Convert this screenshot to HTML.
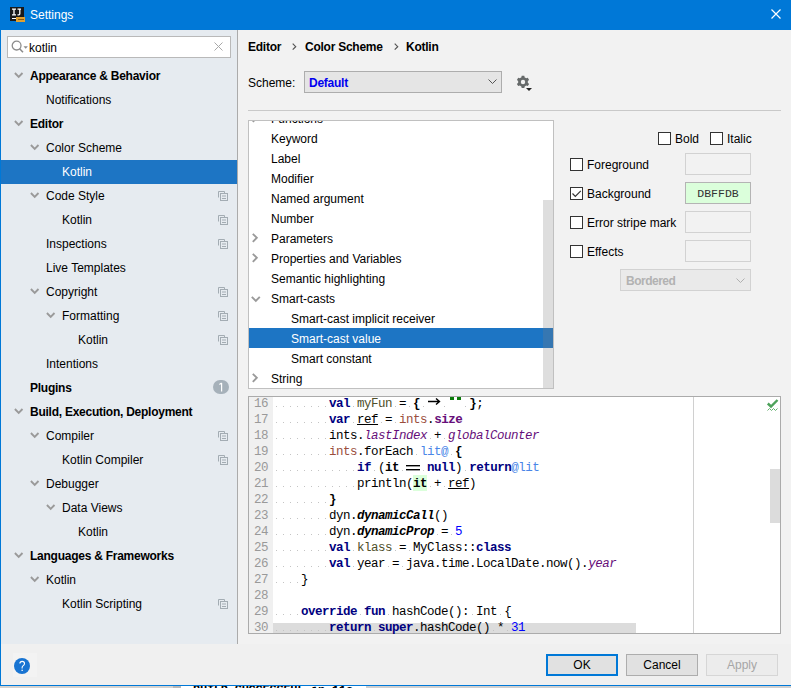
<!DOCTYPE html>
<html><head><meta charset="utf-8"><style>
*{margin:0;padding:0;box-sizing:border-box}
html,body{width:791px;height:688px;overflow:hidden;background:#F0F0F0;font-family:"Liberation Sans",sans-serif;font-size:12px;color:#000}
.a{position:absolute}
.t{position:absolute;line-height:16px;white-space:nowrap}
.b{font-weight:bold;letter-spacing:-0.25px}
.m{font-family:"Liberation Mono",monospace}
svg{position:absolute;overflow:visible}
</style></head><body>
<div class="a" style="left:0px;top:0px;width:791px;height:686px;background:#F0F0F0;"></div>
<div class="a" style="left:0px;top:0px;width:791px;height:30px;background:#0078D7;"></div>
<div class="a" style="left:0px;top:0px;width:1px;height:686px;background:#0078D7;"></div>
<div class="a" style="left:0px;top:685px;width:791px;height:1px;background:#0078D7;"></div>
<div class="a" style="left:0px;top:686px;width:173px;height:2px;background:#D6D3CF;"></div>
<div class="a" style="left:173px;top:686px;width:8px;height:2px;background:#B8B8B8;"></div>
<div class="a" style="left:181px;top:686px;width:185px;height:2px;background:#FFFFFF;"></div>
<div class="a" style="left:366px;top:686px;width:425px;height:2px;background:#D0D0D0;"></div>
<div class="a" style="left:193px;top:686px;width:173px;height:2px;overflow:hidden"><div class="t m b" style="left:0;top:-1px;font-size:12px;line-height:12px;color:#000">BUILD SUCCESSFUL in 11s</div></div>
<div class="a" style="left:10px;top:7px;width:14px;height:14px;background:#1A1A1A;"></div>
<svg style="left:11px;top:8px" width="12" height="8"><path d="M1 1.2H5M3 1.2V6.8M1 6.8H5M6.5 1.2H10M8.8 1.2V5.8Q8.8 6.8 7.8 6.8H6.5" fill="none" stroke="#fff" stroke-width="1.3"/></svg>
<div class="a" style="left:12px;top:18px;width:5px;height:1px;background:#fff;"></div>
<div class="a" style="left:16px;top:17px;width:9px;height:5px;background:#E0A030;"></div>
<div class="a" style="left:18px;top:19px;width:6px;height:1px;background:#8A5A10;"></div>
<div class="t " style="left:30px;top:7px;color:#fff">Settings</div>
<svg style="left:771px;top:9px" width="10" height="10"><path d="M0.5 0.5L9.5 9.5M9.5 0.5L0.5 9.5" stroke="#fff" stroke-width="1.2"/></svg>
<div class="a" style="left:1px;top:30px;width:236px;height:614px;background:#E6EBF0;"></div>
<div class="a" style="left:237px;top:30px;width:1px;height:614px;background:#ABABAB;"></div>
<div class="a" style="left:238px;top:30px;width:553px;height:614px;background:#F2F2F2;"></div>
<div class="a" style="left:7px;top:36px;width:224px;height:22px;background:#fff;border:1px solid #B9B9B9"></div>
<svg style="left:11px;top:40px" width="20" height="14"><circle cx="5.6" cy="5.6" r="4.4" fill="none" stroke="#8C8C8C" stroke-width="1.3"/><path d="M8.6 8.8L12 12.2" stroke="#8C8C8C" stroke-width="1.6"/><path d="M12.5 6.2h4.4l-2.2 2.6z" fill="#8C8C8C"/></svg>
<div class="t " style="left:29px;top:40px;">kotlin</div>
<svg style="left:214px;top:42px" width="9" height="9"><path d="M0.5 0.5L8.5 8.5M8.5 0.5L0.5 8.5" stroke="#A8A8A8" stroke-width="1"/></svg>
<svg style="left:14px;top:72px" width="10" height="7"><path d="M0.9 1L4.7 4.8L8.5 1" fill="none" stroke="#9A9A9A" stroke-width="1.9"/></svg>
<div class="t b" style="left:30px;top:68px;color:#000">Appearance &amp; Behavior</div>
<div class="t " style="left:46px;top:92px;color:#000">Notifications</div>
<svg style="left:14px;top:120px" width="10" height="7"><path d="M0.9 1L4.7 4.8L8.5 1" fill="none" stroke="#9A9A9A" stroke-width="1.9"/></svg>
<div class="t b" style="left:30px;top:116px;color:#000">Editor</div>
<svg style="left:30px;top:144px" width="10" height="7"><path d="M0.9 1L4.7 4.8L8.5 1" fill="none" stroke="#9A9A9A" stroke-width="1.9"/></svg>
<div class="t " style="left:46px;top:140px;color:#000">Color Scheme</div>
<div class="a" style="left:1px;top:160px;width:236px;height:24px;background:#1D75C4;"></div>
<div class="t " style="left:62px;top:164px;color:#fff">Kotlin</div>
<svg style="left:30px;top:192px" width="10" height="7"><path d="M0.9 1L4.7 4.8L8.5 1" fill="none" stroke="#9A9A9A" stroke-width="1.9"/></svg>
<div class="t " style="left:46px;top:188px;color:#000">Code Style</div>
<svg style="left:218px;top:191px" width="10" height="10"><path d="M0.5 6.5V0.5H6.5V2" fill="none" stroke="#A3ACB3" stroke-width="1"/><rect x="2.5" y="2.5" width="7" height="7" fill="none" stroke="#A3ACB3" stroke-width="1"/><path d="M4 5h4M4 7.5h4" stroke="#A3ACB3" stroke-width="1"/></svg>
<div class="t " style="left:62px;top:212px;color:#000">Kotlin</div>
<svg style="left:218px;top:215px" width="10" height="10"><path d="M0.5 6.5V0.5H6.5V2" fill="none" stroke="#A3ACB3" stroke-width="1"/><rect x="2.5" y="2.5" width="7" height="7" fill="none" stroke="#A3ACB3" stroke-width="1"/><path d="M4 5h4M4 7.5h4" stroke="#A3ACB3" stroke-width="1"/></svg>
<div class="t " style="left:46px;top:236px;color:#000">Inspections</div>
<svg style="left:218px;top:239px" width="10" height="10"><path d="M0.5 6.5V0.5H6.5V2" fill="none" stroke="#A3ACB3" stroke-width="1"/><rect x="2.5" y="2.5" width="7" height="7" fill="none" stroke="#A3ACB3" stroke-width="1"/><path d="M4 5h4M4 7.5h4" stroke="#A3ACB3" stroke-width="1"/></svg>
<div class="t " style="left:46px;top:260px;color:#000">Live Templates</div>
<svg style="left:30px;top:288px" width="10" height="7"><path d="M0.9 1L4.7 4.8L8.5 1" fill="none" stroke="#9A9A9A" stroke-width="1.9"/></svg>
<div class="t " style="left:46px;top:284px;color:#000">Copyright</div>
<svg style="left:218px;top:287px" width="10" height="10"><path d="M0.5 6.5V0.5H6.5V2" fill="none" stroke="#A3ACB3" stroke-width="1"/><rect x="2.5" y="2.5" width="7" height="7" fill="none" stroke="#A3ACB3" stroke-width="1"/><path d="M4 5h4M4 7.5h4" stroke="#A3ACB3" stroke-width="1"/></svg>
<svg style="left:46px;top:312px" width="10" height="7"><path d="M0.9 1L4.7 4.8L8.5 1" fill="none" stroke="#9A9A9A" stroke-width="1.9"/></svg>
<div class="t " style="left:62px;top:308px;color:#000">Formatting</div>
<svg style="left:218px;top:311px" width="10" height="10"><path d="M0.5 6.5V0.5H6.5V2" fill="none" stroke="#A3ACB3" stroke-width="1"/><rect x="2.5" y="2.5" width="7" height="7" fill="none" stroke="#A3ACB3" stroke-width="1"/><path d="M4 5h4M4 7.5h4" stroke="#A3ACB3" stroke-width="1"/></svg>
<div class="t " style="left:78px;top:332px;color:#000">Kotlin</div>
<svg style="left:218px;top:335px" width="10" height="10"><path d="M0.5 6.5V0.5H6.5V2" fill="none" stroke="#A3ACB3" stroke-width="1"/><rect x="2.5" y="2.5" width="7" height="7" fill="none" stroke="#A3ACB3" stroke-width="1"/><path d="M4 5h4M4 7.5h4" stroke="#A3ACB3" stroke-width="1"/></svg>
<div class="t " style="left:46px;top:356px;color:#000">Intentions</div>
<div class="t b" style="left:30px;top:380px;color:#000">Plugins</div>
<svg style="left:14px;top:408px" width="10" height="7"><path d="M0.9 1L4.7 4.8L8.5 1" fill="none" stroke="#9A9A9A" stroke-width="1.9"/></svg>
<div class="t b" style="left:30px;top:404px;color:#000">Build, Execution, Deployment</div>
<svg style="left:30px;top:432px" width="10" height="7"><path d="M0.9 1L4.7 4.8L8.5 1" fill="none" stroke="#9A9A9A" stroke-width="1.9"/></svg>
<div class="t " style="left:46px;top:428px;color:#000">Compiler</div>
<svg style="left:218px;top:431px" width="10" height="10"><path d="M0.5 6.5V0.5H6.5V2" fill="none" stroke="#A3ACB3" stroke-width="1"/><rect x="2.5" y="2.5" width="7" height="7" fill="none" stroke="#A3ACB3" stroke-width="1"/><path d="M4 5h4M4 7.5h4" stroke="#A3ACB3" stroke-width="1"/></svg>
<div class="t " style="left:62px;top:452px;color:#000">Kotlin Compiler</div>
<svg style="left:218px;top:455px" width="10" height="10"><path d="M0.5 6.5V0.5H6.5V2" fill="none" stroke="#A3ACB3" stroke-width="1"/><rect x="2.5" y="2.5" width="7" height="7" fill="none" stroke="#A3ACB3" stroke-width="1"/><path d="M4 5h4M4 7.5h4" stroke="#A3ACB3" stroke-width="1"/></svg>
<svg style="left:30px;top:480px" width="10" height="7"><path d="M0.9 1L4.7 4.8L8.5 1" fill="none" stroke="#9A9A9A" stroke-width="1.9"/></svg>
<div class="t " style="left:46px;top:476px;color:#000">Debugger</div>
<svg style="left:46px;top:504px" width="10" height="7"><path d="M0.9 1L4.7 4.8L8.5 1" fill="none" stroke="#9A9A9A" stroke-width="1.9"/></svg>
<div class="t " style="left:62px;top:500px;color:#000">Data Views</div>
<div class="t " style="left:78px;top:524px;color:#000">Kotlin</div>
<svg style="left:14px;top:552px" width="10" height="7"><path d="M0.9 1L4.7 4.8L8.5 1" fill="none" stroke="#9A9A9A" stroke-width="1.9"/></svg>
<div class="t b" style="left:30px;top:548px;color:#000">Languages &amp; Frameworks</div>
<svg style="left:30px;top:576px" width="10" height="7"><path d="M0.9 1L4.7 4.8L8.5 1" fill="none" stroke="#9A9A9A" stroke-width="1.9"/></svg>
<div class="t " style="left:46px;top:572px;color:#000">Kotlin</div>
<div class="t " style="left:62px;top:596px;color:#000">Kotlin Scripting</div>
<svg style="left:218px;top:599px" width="10" height="10"><path d="M0.5 6.5V0.5H6.5V2" fill="none" stroke="#A3ACB3" stroke-width="1"/><rect x="2.5" y="2.5" width="7" height="7" fill="none" stroke="#A3ACB3" stroke-width="1"/><path d="M4 5h4M4 7.5h4" stroke="#A3ACB3" stroke-width="1"/></svg>
<div class="a" style="left:213px;top:380px;width:16px;height:14px;background:#A6B1BA;border-radius:7px"></div>
<svg style="left:213px;top:380px" width="16" height="14"><path d="M8.6 3V11.6M6.4 4.4L8.6 3" fill="none" stroke="#fff" stroke-width="1.2"/></svg>
<div class="a" style="left:13px;top:653px;width:24px;height:24px;background:#F3F3F3;"></div>
<div class="a" style="left:14px;top:658px;width:16px;height:16px;border-radius:8px;background:#1874D2"></div>
<svg style="left:14px;top:658px" width="16" height="16"><path d="M5.9 5.6Q5.9 3.4 8.2 3.4Q10.5 3.4 10.5 5.5Q10.5 6.8 9.2 7.6Q8.1 8.3 8.1 9.8V10.6" fill="none" stroke="#fff" stroke-width="1.1"/><rect x="7.5" y="11.7" width="1.3" height="1.3" fill="#fff"/></svg>
<div class="t b" style="left:248px;top:39px;">Editor</div>
<svg style="left:292px;top:43px" width="5" height="8"><path d="M0.7 0.7L3.7 3.7L0.7 6.7" fill="none" stroke="#555" stroke-width="1.2"/></svg>
<div class="t b" style="left:305px;top:39px;">Color Scheme</div>
<svg style="left:394px;top:43px" width="5" height="8"><path d="M0.7 0.7L3.7 3.7L0.7 6.7" fill="none" stroke="#555" stroke-width="1.2"/></svg>
<div class="t b" style="left:406px;top:39px;">Kotlin</div>
<div class="t " style="left:248px;top:75px;">Scheme:</div>
<div class="a" style="left:304px;top:71px;width:198px;height:22px;background:#E5E5E5;border:1px solid #ADADAD"></div>
<div class="t b" style="left:309px;top:75px;color:#0000F0">Default</div>
<svg style="left:488px;top:79px" width="10" height="6"><path d="M0.5 0.5L4.5 4.5L8.5 0.5" fill="none" stroke="#555" stroke-width="1"/></svg>
<svg style="left:516px;top:75px" width="18" height="18" viewBox="0 0 18 18"><g transform="translate(7,7)"><path fill="#666A6A" d="M-1.3,-6.3h2.6l0.4,1.7a4.6,4.6 0 0 1 1.4,0.8l1.7,-0.5l1.3,2.2l-1.3,1.2a4.6,4.6 0 0 1 0,1.6l1.3,1.2l-1.3,2.2l-1.7,-0.5a4.6,4.6 0 0 1 -1.4,0.8l-0.4,1.7h-2.6l-0.4,-1.7a4.6,4.6 0 0 1 -1.4,-0.8l-1.7,0.5l-1.3,-2.2l1.3,-1.2a4.6,4.6 0 0 1 0,-1.6l-1.3,-1.2l1.3,-2.2l1.7,0.5a4.6,4.6 0 0 1 1.4,-0.8z"/><circle r="2.2" fill="#F2F2F2"/></g><path d="M10 13h6l-3 3z" fill="#222"/></svg>
<div class="a" style="left:248px;top:110px;width:533px;height:1px;background:#C9C9C9;"></div>
<div class="a" style="left:248px;top:120px;width:306px;height:269px;background:#fff;border:1px solid #C0C0C0;overflow:hidden">
<svg style="left:3px;top:-8px" width="7" height="10"><path d="M0.8 0.8L4.8 4.8L0.8 8.8" fill="none" stroke="#9A9A9A" stroke-width="1.9"/></svg>
<div class="t" style="left:22px;top:-10px;color:#000">Functions</div>
<div class="t" style="left:22px;top:10px;color:#000">Keyword</div>
<div class="t" style="left:22px;top:30px;color:#000">Label</div>
<div class="t" style="left:22px;top:50px;color:#000">Modifier</div>
<div class="t" style="left:22px;top:70px;color:#000">Named argument</div>
<div class="t" style="left:22px;top:90px;color:#000">Number</div>
<svg style="left:3px;top:112px" width="7" height="10"><path d="M0.8 0.8L4.8 4.8L0.8 8.8" fill="none" stroke="#9A9A9A" stroke-width="1.9"/></svg>
<div class="t" style="left:22px;top:110px;color:#000">Parameters</div>
<svg style="left:3px;top:132px" width="7" height="10"><path d="M0.8 0.8L4.8 4.8L0.8 8.8" fill="none" stroke="#9A9A9A" stroke-width="1.9"/></svg>
<div class="t" style="left:22px;top:130px;color:#000">Properties and Variables</div>
<div class="t" style="left:22px;top:150px;color:#000">Semantic highlighting</div>
<svg style="left:2px;top:175px" width="10" height="6"><path d="M0.8 0.8L4.8 4.8L8.8 0.8" fill="none" stroke="#9A9A9A" stroke-width="1.9"/></svg>
<div class="t" style="left:22px;top:170px;color:#000">Smart-casts</div>
<div class="t" style="left:42px;top:190px;color:#000">Smart-cast implicit receiver</div>
<div class="a" style="left:0;top:207px;width:304px;height:20px;background:#1D75C4"></div>
<div class="t" style="left:42px;top:210px;color:#fff">Smart-cast value</div>
<div class="t" style="left:42px;top:230px;color:#000">Smart constant</div>
<svg style="left:3px;top:252px" width="7" height="10"><path d="M0.8 0.8L4.8 4.8L0.8 8.8" fill="none" stroke="#9A9A9A" stroke-width="1.9"/></svg>
<div class="t" style="left:22px;top:250px;color:#000">String</div>
<div class="a" style="left:294px;top:79px;width:10px;height:188px;background:rgba(128,128,128,0.26)"></div>
</div>
<div class="a" style="left:658px;top:132px;width:13px;height:13px;background:#fff;border:1px solid #333"></div>
<div class="t " style="left:675px;top:131px;">Bold</div>
<div class="a" style="left:710px;top:132px;width:13px;height:13px;background:#fff;border:1px solid #333"></div>
<div class="t " style="left:727px;top:131px;">Italic</div>
<div class="a" style="left:570px;top:158px;width:13px;height:13px;background:#fff;border:1px solid #333"></div>
<div class="t " style="left:587px;top:157px;">Foreground</div>
<div class="a" style="left:685px;top:153px;width:66px;height:22px;background:#F2F2F2;border:1px solid #D2D2D2"></div>
<div class="a" style="left:570px;top:187px;width:13px;height:13px;background:#fff;border:1px solid #333"></div>
<svg style="left:572px;top:190px" width="10" height="8"><path d="M0.5 3.5L3.3 6.3L8.8 0.8" fill="none" stroke="#333" stroke-width="1.2"/></svg>
<div class="t " style="left:587px;top:186px;">Background</div>
<div class="a" style="left:685px;top:182px;width:66px;height:22px;background:#DBFFDB;border:1px solid #B4B4B4"></div>
<div class="t m" style="left:685px;top:186px;width:66px;text-align:center;font-size:11.5px;color:#333">DBFFDB</div>
<div class="a" style="left:570px;top:216px;width:13px;height:13px;background:#fff;border:1px solid #333"></div>
<div class="t " style="left:587px;top:215px;">Error stripe mark</div>
<div class="a" style="left:685px;top:211px;width:66px;height:22px;background:#F2F2F2;border:1px solid #D2D2D2"></div>
<div class="a" style="left:570px;top:245px;width:13px;height:13px;background:#fff;border:1px solid #333"></div>
<div class="t " style="left:587px;top:244px;">Effects</div>
<div class="a" style="left:685px;top:240px;width:66px;height:22px;background:#F2F2F2;border:1px solid #D2D2D2"></div>
<div class="a" style="left:620px;top:269px;width:131px;height:22px;background:#EAEAEA;border:1px solid #D2D2D2"></div>
<div class="t " style="left:626px;top:273px;color:#B2B2B2;font-weight:bold;letter-spacing:-0.5px">Bordered</div>
<svg style="left:736px;top:278px" width="10" height="6"><path d="M0.5 0.5L4.5 4.5L8.5 0.5" fill="none" stroke="#B0B0B0" stroke-width="1"/></svg>
<div class="a" style="left:248px;top:396px;width:533px;height:238px;border:1px solid #ABABAB;background:#fff;overflow:hidden">
<div class="a" style="left:0;top:0;width:24px;height:236px;background:#F0F0F0"></div>
<div class="a" style="left:444px;top:0;width:1px;height:236px;background:#D0D0D0"></div>
</div>
<div class="a" style="left:273px;top:623px;width:363px;height:10px;background:#DCDCDC;"></div>
<div class="t m" style="left:254px;top:396px;font-size:12.5px;line-height:16px;color:#999;letter-spacing:-0.5px">16</div>
<div class="a" style="left:273px;top:406px;width:56px;height:1px;background:linear-gradient(90deg,transparent 3px,#C4C4C4 3px,#C4C4C4 4px,transparent 4px) 0 0/7px 1px repeat-x"></div>
<div class="a" style="left:350px;top:406px;width:7px;height:1px;background:linear-gradient(90deg,transparent 3px,#C4C4C4 3px,#C4C4C4 4px,transparent 4px) 0 0/7px 1px repeat-x"></div>
<div class="a" style="left:392px;top:406px;width:7px;height:1px;background:linear-gradient(90deg,transparent 3px,#C4C4C4 3px,#C4C4C4 4px,transparent 4px) 0 0/7px 1px repeat-x"></div>
<div class="a" style="left:406px;top:406px;width:7px;height:1px;background:linear-gradient(90deg,transparent 3px,#C4C4C4 3px,#C4C4C4 4px,transparent 4px) 0 0/7px 1px repeat-x"></div>
<div class="a" style="left:420px;top:406px;width:7px;height:1px;background:linear-gradient(90deg,transparent 3px,#C4C4C4 3px,#C4C4C4 4px,transparent 4px) 0 0/7px 1px repeat-x"></div>
<svg style="left:427px;top:398px" width="14" height="9"><path d="M1 3.5H12.5M9 0.5L12.5 3.5L9 6.5" fill="none" stroke="#000" stroke-width="1.4"/></svg>
<div class="a" style="left:441px;top:406px;width:7px;height:1px;background:linear-gradient(90deg,transparent 3px,#C4C4C4 3px,#C4C4C4 4px,transparent 4px) 0 0/7px 1px repeat-x"></div>
<div class="a" style="left:450px;top:397px;width:4px;height:3px;background:#0A7A0A;"></div>
<div class="a" style="left:457px;top:397px;width:4px;height:3px;background:#0A7A0A;"></div>
<div class="a" style="left:462px;top:406px;width:7px;height:1px;background:linear-gradient(90deg,transparent 3px,#C4C4C4 3px,#C4C4C4 4px,transparent 4px) 0 0/7px 1px repeat-x"></div>
<div class="t m" style="left:329px;top:396px;font-size:12.5px;line-height:16px;white-space:pre;letter-spacing:-0.5px"><span style="color:#000080;font-weight:bold">val</span> <span style="color:#4F4F2A">myFun</span> <span style="color:#000">=</span> <span style="color:#000;font-weight:bold">{</span>       <span style="color:#000;font-weight:bold">}</span><span style="color:#000">;</span></div>
<div class="t m" style="left:254px;top:412px;font-size:12.5px;line-height:16px;color:#999;letter-spacing:-0.5px">17</div>
<div class="a" style="left:273px;top:422px;width:56px;height:1px;background:linear-gradient(90deg,transparent 3px,#C4C4C4 3px,#C4C4C4 4px,transparent 4px) 0 0/7px 1px repeat-x"></div>
<div class="a" style="left:350px;top:422px;width:7px;height:1px;background:linear-gradient(90deg,transparent 3px,#C4C4C4 3px,#C4C4C4 4px,transparent 4px) 0 0/7px 1px repeat-x"></div>
<div class="a" style="left:378px;top:422px;width:7px;height:1px;background:linear-gradient(90deg,transparent 3px,#C4C4C4 3px,#C4C4C4 4px,transparent 4px) 0 0/7px 1px repeat-x"></div>
<div class="a" style="left:392px;top:422px;width:7px;height:1px;background:linear-gradient(90deg,transparent 3px,#C4C4C4 3px,#C4C4C4 4px,transparent 4px) 0 0/7px 1px repeat-x"></div>
<div class="t m" style="left:329px;top:412px;font-size:12.5px;line-height:16px;white-space:pre;letter-spacing:-0.5px"><span style="color:#000080;font-weight:bold">var</span> <span style="color:#000;text-decoration:underline">ref</span> <span style="color:#000">=</span> <span style="color:#9A4E3C">ints</span><span style="color:#000">.</span><span style="color:#660E7A;font-weight:bold">size</span></div>
<div class="t m" style="left:254px;top:428px;font-size:12.5px;line-height:16px;color:#999;letter-spacing:-0.5px">18</div>
<div class="a" style="left:273px;top:438px;width:56px;height:1px;background:linear-gradient(90deg,transparent 3px,#C4C4C4 3px,#C4C4C4 4px,transparent 4px) 0 0/7px 1px repeat-x"></div>
<div class="a" style="left:427px;top:438px;width:7px;height:1px;background:linear-gradient(90deg,transparent 3px,#C4C4C4 3px,#C4C4C4 4px,transparent 4px) 0 0/7px 1px repeat-x"></div>
<div class="a" style="left:441px;top:438px;width:7px;height:1px;background:linear-gradient(90deg,transparent 3px,#C4C4C4 3px,#C4C4C4 4px,transparent 4px) 0 0/7px 1px repeat-x"></div>
<div class="t m" style="left:329px;top:428px;font-size:12.5px;line-height:16px;white-space:pre;letter-spacing:-0.5px"><span style="color:#000">ints</span><span style="color:#000">.</span><span style="color:#660E7A;font-style:italic">lastIndex</span> <span style="color:#000">+</span> <span style="color:#660E7A;font-style:italic">globalCounter</span></div>
<div class="t m" style="left:254px;top:444px;font-size:12.5px;line-height:16px;color:#999;letter-spacing:-0.5px">19</div>
<div class="a" style="left:273px;top:454px;width:56px;height:1px;background:linear-gradient(90deg,transparent 3px,#C4C4C4 3px,#C4C4C4 4px,transparent 4px) 0 0/7px 1px repeat-x"></div>
<div class="a" style="left:413px;top:454px;width:7px;height:1px;background:linear-gradient(90deg,transparent 3px,#C4C4C4 3px,#C4C4C4 4px,transparent 4px) 0 0/7px 1px repeat-x"></div>
<div class="a" style="left:448px;top:454px;width:7px;height:1px;background:linear-gradient(90deg,transparent 3px,#C4C4C4 3px,#C4C4C4 4px,transparent 4px) 0 0/7px 1px repeat-x"></div>
<div class="t m" style="left:329px;top:444px;font-size:12.5px;line-height:16px;white-space:pre;letter-spacing:-0.5px"><span style="color:#9A4E3C">ints</span><span style="color:#000">.forEach</span> <span style="color:#4A86E8">lit@</span> <span style="color:#000;font-weight:bold">{</span></div>
<div class="t m" style="left:254px;top:460px;font-size:12.5px;line-height:16px;color:#999;letter-spacing:-0.5px">20</div>
<div class="a" style="left:273px;top:470px;width:84px;height:1px;background:linear-gradient(90deg,transparent 3px,#C4C4C4 3px,#C4C4C4 4px,transparent 4px) 0 0/7px 1px repeat-x"></div>
<div class="a" style="left:371px;top:470px;width:7px;height:1px;background:linear-gradient(90deg,transparent 3px,#C4C4C4 3px,#C4C4C4 4px,transparent 4px) 0 0/7px 1px repeat-x"></div>
<div class="a" style="left:399px;top:470px;width:7px;height:1px;background:linear-gradient(90deg,transparent 3px,#C4C4C4 3px,#C4C4C4 4px,transparent 4px) 0 0/7px 1px repeat-x"></div>
<div class="a" style="left:406px;top:465px;width:14px;height:1px;background:#000;"></div>
<div class="a" style="left:406px;top:466px;width:14px;height:1px;background:#9A9A9A;"></div>
<div class="a" style="left:406px;top:469px;width:14px;height:1px;background:#000;"></div>
<div class="a" style="left:406px;top:470px;width:14px;height:1px;background:#9A9A9A;"></div>
<div class="a" style="left:420px;top:470px;width:7px;height:1px;background:linear-gradient(90deg,transparent 3px,#C4C4C4 3px,#C4C4C4 4px,transparent 4px) 0 0/7px 1px repeat-x"></div>
<div class="a" style="left:462px;top:470px;width:7px;height:1px;background:linear-gradient(90deg,transparent 3px,#C4C4C4 3px,#C4C4C4 4px,transparent 4px) 0 0/7px 1px repeat-x"></div>
<div class="t m" style="left:357px;top:460px;font-size:12.5px;line-height:16px;white-space:pre;letter-spacing:-0.5px"><span style="color:#000080;font-weight:bold">if</span> <span style="color:#000">(</span><span style="color:#000;font-weight:bold">it</span>    <span style="color:#000080;font-weight:bold">null</span><span style="color:#000">)</span> <span style="color:#000080;font-weight:bold">return</span><span style="color:#4A86E8">@lit</span></div>
<div class="t m" style="left:254px;top:476px;font-size:12.5px;line-height:16px;color:#999;letter-spacing:-0.5px">21</div>
<div class="a" style="left:273px;top:486px;width:84px;height:1px;background:linear-gradient(90deg,transparent 3px,#C4C4C4 3px,#C4C4C4 4px,transparent 4px) 0 0/7px 1px repeat-x"></div>
<div class="a" style="left:413px;top:475px;width:14px;height:16px;background:#DBFFDB;"></div>
<div class="a" style="left:427px;top:486px;width:7px;height:1px;background:linear-gradient(90deg,transparent 3px,#C4C4C4 3px,#C4C4C4 4px,transparent 4px) 0 0/7px 1px repeat-x"></div>
<div class="a" style="left:441px;top:486px;width:7px;height:1px;background:linear-gradient(90deg,transparent 3px,#C4C4C4 3px,#C4C4C4 4px,transparent 4px) 0 0/7px 1px repeat-x"></div>
<div class="t m" style="left:357px;top:476px;font-size:12.5px;line-height:16px;white-space:pre;letter-spacing:-0.5px"><span style="color:#000">println(</span><span style="color:#000;font-weight:bold">it</span> <span style="color:#000">+</span> <span style="color:#000;text-decoration:underline">ref</span><span style="color:#000">)</span></div>
<div class="t m" style="left:254px;top:492px;font-size:12.5px;line-height:16px;color:#999;letter-spacing:-0.5px">22</div>
<div class="a" style="left:273px;top:502px;width:56px;height:1px;background:linear-gradient(90deg,transparent 3px,#C4C4C4 3px,#C4C4C4 4px,transparent 4px) 0 0/7px 1px repeat-x"></div>
<div class="t m" style="left:329px;top:492px;font-size:12.5px;line-height:16px;white-space:pre;letter-spacing:-0.5px"><span style="color:#000;font-weight:bold">}</span></div>
<div class="t m" style="left:254px;top:508px;font-size:12.5px;line-height:16px;color:#999;letter-spacing:-0.5px">23</div>
<div class="a" style="left:273px;top:518px;width:56px;height:1px;background:linear-gradient(90deg,transparent 3px,#C4C4C4 3px,#C4C4C4 4px,transparent 4px) 0 0/7px 1px repeat-x"></div>
<div class="t m" style="left:329px;top:508px;font-size:12.5px;line-height:16px;white-space:pre;letter-spacing:-0.5px"><span style="color:#000">dyn.</span><span style="color:#000;font-weight:bold;font-style:italic">dynamicCall</span><span style="color:#000">()</span></div>
<div class="t m" style="left:254px;top:524px;font-size:12.5px;line-height:16px;color:#999;letter-spacing:-0.5px">24</div>
<div class="a" style="left:273px;top:534px;width:56px;height:1px;background:linear-gradient(90deg,transparent 3px,#C4C4C4 3px,#C4C4C4 4px,transparent 4px) 0 0/7px 1px repeat-x"></div>
<div class="a" style="left:434px;top:534px;width:7px;height:1px;background:linear-gradient(90deg,transparent 3px,#C4C4C4 3px,#C4C4C4 4px,transparent 4px) 0 0/7px 1px repeat-x"></div>
<div class="a" style="left:448px;top:534px;width:7px;height:1px;background:linear-gradient(90deg,transparent 3px,#C4C4C4 3px,#C4C4C4 4px,transparent 4px) 0 0/7px 1px repeat-x"></div>
<div class="t m" style="left:329px;top:524px;font-size:12.5px;line-height:16px;white-space:pre;letter-spacing:-0.5px"><span style="color:#000">dyn.</span><span style="color:#000;font-weight:bold;font-style:italic">dynamicProp</span> <span style="color:#000">=</span> <span style="color:#0000FF">5</span></div>
<div class="t m" style="left:254px;top:540px;font-size:12.5px;line-height:16px;color:#999;letter-spacing:-0.5px">25</div>
<div class="a" style="left:273px;top:550px;width:56px;height:1px;background:linear-gradient(90deg,transparent 3px,#C4C4C4 3px,#C4C4C4 4px,transparent 4px) 0 0/7px 1px repeat-x"></div>
<div class="a" style="left:350px;top:550px;width:7px;height:1px;background:linear-gradient(90deg,transparent 3px,#C4C4C4 3px,#C4C4C4 4px,transparent 4px) 0 0/7px 1px repeat-x"></div>
<div class="a" style="left:392px;top:550px;width:7px;height:1px;background:linear-gradient(90deg,transparent 3px,#C4C4C4 3px,#C4C4C4 4px,transparent 4px) 0 0/7px 1px repeat-x"></div>
<div class="a" style="left:406px;top:550px;width:7px;height:1px;background:linear-gradient(90deg,transparent 3px,#C4C4C4 3px,#C4C4C4 4px,transparent 4px) 0 0/7px 1px repeat-x"></div>
<div class="t m" style="left:329px;top:540px;font-size:12.5px;line-height:16px;white-space:pre;letter-spacing:-0.5px"><span style="color:#000080;font-weight:bold">val</span> <span style="color:#4F4F2A">klass</span> <span style="color:#000">=</span> <span style="color:#000">MyClass::</span><span style="color:#000080;font-weight:bold">class</span></div>
<div class="t m" style="left:254px;top:556px;font-size:12.5px;line-height:16px;color:#999;letter-spacing:-0.5px">26</div>
<div class="a" style="left:273px;top:566px;width:56px;height:1px;background:linear-gradient(90deg,transparent 3px,#C4C4C4 3px,#C4C4C4 4px,transparent 4px) 0 0/7px 1px repeat-x"></div>
<div class="a" style="left:350px;top:566px;width:7px;height:1px;background:linear-gradient(90deg,transparent 3px,#C4C4C4 3px,#C4C4C4 4px,transparent 4px) 0 0/7px 1px repeat-x"></div>
<div class="a" style="left:385px;top:566px;width:7px;height:1px;background:linear-gradient(90deg,transparent 3px,#C4C4C4 3px,#C4C4C4 4px,transparent 4px) 0 0/7px 1px repeat-x"></div>
<div class="a" style="left:399px;top:566px;width:7px;height:1px;background:linear-gradient(90deg,transparent 3px,#C4C4C4 3px,#C4C4C4 4px,transparent 4px) 0 0/7px 1px repeat-x"></div>
<div class="t m" style="left:329px;top:556px;font-size:12.5px;line-height:16px;white-space:pre;letter-spacing:-0.5px"><span style="color:#000080;font-weight:bold">val</span> <span style="color:#000">year</span> <span style="color:#000">=</span> <span style="color:#000">java.time.LocalDate.now().</span><span style="color:#660E7A;font-style:italic">year</span></div>
<div class="t m" style="left:254px;top:572px;font-size:12.5px;line-height:16px;color:#999;letter-spacing:-0.5px">27</div>
<div class="a" style="left:273px;top:582px;width:28px;height:1px;background:linear-gradient(90deg,transparent 3px,#C4C4C4 3px,#C4C4C4 4px,transparent 4px) 0 0/7px 1px repeat-x"></div>
<div class="t m" style="left:301px;top:572px;font-size:12.5px;line-height:16px;white-space:pre;letter-spacing:-0.5px"><span style="color:#000">}</span></div>
<div class="t m" style="left:254px;top:588px;font-size:12.5px;line-height:16px;color:#999;letter-spacing:-0.5px">28</div>
<div class="t m" style="left:254px;top:604px;font-size:12.5px;line-height:16px;color:#999;letter-spacing:-0.5px">29</div>
<div class="a" style="left:273px;top:614px;width:28px;height:1px;background:linear-gradient(90deg,transparent 3px,#C4C4C4 3px,#C4C4C4 4px,transparent 4px) 0 0/7px 1px repeat-x"></div>
<div class="a" style="left:357px;top:614px;width:7px;height:1px;background:linear-gradient(90deg,transparent 3px,#C4C4C4 3px,#C4C4C4 4px,transparent 4px) 0 0/7px 1px repeat-x"></div>
<div class="a" style="left:385px;top:614px;width:7px;height:1px;background:linear-gradient(90deg,transparent 3px,#C4C4C4 3px,#C4C4C4 4px,transparent 4px) 0 0/7px 1px repeat-x"></div>
<div class="a" style="left:469px;top:614px;width:7px;height:1px;background:linear-gradient(90deg,transparent 3px,#C4C4C4 3px,#C4C4C4 4px,transparent 4px) 0 0/7px 1px repeat-x"></div>
<div class="a" style="left:497px;top:614px;width:7px;height:1px;background:linear-gradient(90deg,transparent 3px,#C4C4C4 3px,#C4C4C4 4px,transparent 4px) 0 0/7px 1px repeat-x"></div>
<div class="t m" style="left:301px;top:604px;font-size:12.5px;line-height:16px;white-space:pre;letter-spacing:-0.5px"><span style="color:#000080;font-weight:bold">override</span> <span style="color:#000080;font-weight:bold">fun</span> <span style="color:#000">hashCode():</span> <span style="color:#000">Int</span> <span style="color:#000">{</span></div>
<div class="t m" style="left:254px;top:620px;font-size:12.5px;line-height:16px;color:#999;letter-spacing:-0.5px">30</div>
<div class="a" style="left:273px;top:630px;width:56px;height:1px;background:linear-gradient(90deg,transparent 3px,#C4C4C4 3px,#C4C4C4 4px,transparent 4px) 0 0/7px 1px repeat-x"></div>
<div class="a" style="left:371px;top:630px;width:7px;height:1px;background:linear-gradient(90deg,transparent 3px,#C4C4C4 3px,#C4C4C4 4px,transparent 4px) 0 0/7px 1px repeat-x"></div>
<div class="a" style="left:490px;top:630px;width:7px;height:1px;background:linear-gradient(90deg,transparent 3px,#C4C4C4 3px,#C4C4C4 4px,transparent 4px) 0 0/7px 1px repeat-x"></div>
<div class="a" style="left:504px;top:630px;width:7px;height:1px;background:linear-gradient(90deg,transparent 3px,#C4C4C4 3px,#C4C4C4 4px,transparent 4px) 0 0/7px 1px repeat-x"></div>
<div class="t m" style="left:329px;top:620px;font-size:12.5px;line-height:16px;white-space:pre;letter-spacing:-0.5px"><span style="color:#000080;font-weight:bold">return</span> <span style="color:#000080;font-weight:bold">super</span><span style="color:#000">.hashCode()</span> <span style="color:#000">*</span> <span style="color:#0000FF">31</span></div>
<div class="a" style="left:770px;top:469px;width:10px;height:54px;background:#DCDCDC;"></div>
<svg style="left:767px;top:399px" width="12" height="13"><path d="M0.8 4.5L4 7.5L10.5 1" fill="none" stroke="#4DA25A" stroke-width="2.4"/><path d="M0.5 11.5L2.5 9.5L4.5 11.5L6.5 9.5L8.5 11.5L10.5 9.5" fill="none" stroke="#62B06D" stroke-width="1"/></svg>
<div class="a" style="left:546px;top:654px;width:72px;height:22px;background:#E1E1E1;border:2px solid #0078D7"></div>
<div class="t" style="left:546px;top:657px;width:72px;text-align:center;color:#000">OK</div>
<div class="a" style="left:626px;top:654px;width:72px;height:22px;background:#E1E1E1;border:1px solid #ADADAD"></div>
<div class="t" style="left:626px;top:657px;width:72px;text-align:center;color:#000">Cancel</div>
<div class="a" style="left:706px;top:654px;width:72px;height:22px;background:#ECECEC;border:1px solid #D6D6D6"></div>
<div class="t" style="left:706px;top:657px;width:72px;text-align:center;color:#A6A6A6">Apply</div>
</body></html>
